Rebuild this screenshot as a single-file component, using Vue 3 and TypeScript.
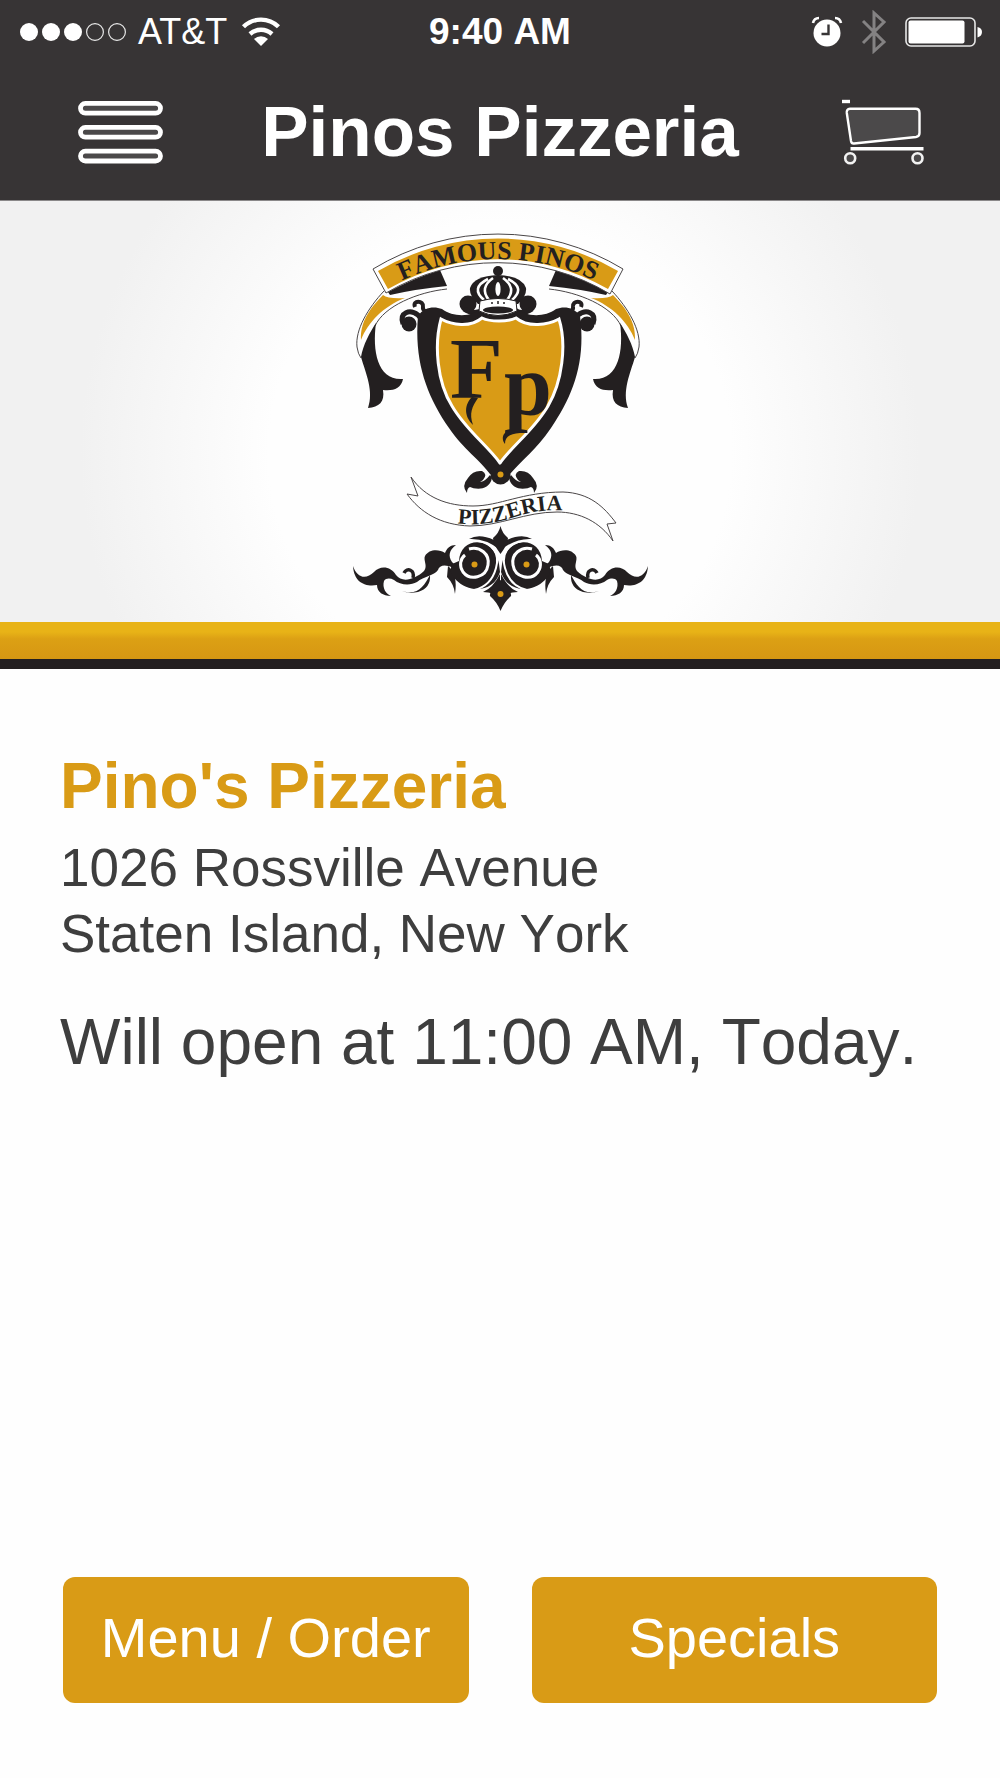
<script setup lang="ts">
interface Action {
  label: string
}

const restaurant = {
  title: 'Pinos Pizzeria',
  name: "Pino's Pizzeria",
  street: '1026 Rossville Avenue',
  city: 'Staten Island, New York',
  hours: 'Will open at 11:00 AM, Today.',
}

const status = { carrier: 'AT&T', time: '9:40 AM', bars: 3 }

const actions: Action[] = [{ label: 'Menu / Order' }, { label: 'Specials' }]

const mirrorCrest = 'translate(996 0) scale(-1 1)'
const mirrorBase = 'translate(1001 0) scale(-1 1)'
</script>

<template>
  <div class="page">
    <header class="header">
      <div class="status">
        <div class="status-left">
          <svg width="111" height="20" viewBox="0 0 111 20" aria-hidden="true">
            <circle
              v-for="n in 5"
              :key="n"
              :cx="n * 22 - 10"
              cy="10"
              :r="n <= status.bars ? 9 : 8.4"
              :fill="n <= status.bars ? '#fff' : 'none'"
              :stroke="n <= status.bars ? 'none' : '#e8e8e8'"
              stroke-width="1.2"
            />
          </svg>
          <span class="carrier">{{ status.carrier }}</span>
          <svg width="40" height="30" viewBox="0 0 40 30" aria-hidden="true">
            <g fill="none" stroke="#fff" stroke-width="4.4">
              <path d="M2.5 9.8 A25 25 0 0 1 37.5 9.8" />
              <path d="M9 17 A16.5 16.5 0 0 1 31 17" />
            </g>
            <path d="M13 22 A10.5 10.5 0 0 1 27 22 L20 29 Z" fill="#fff" />
          </svg>
        </div>
        <span class="time">{{ status.time }}</span>
        <div class="status-right">
          <svg width="32" height="32" viewBox="0 0 32 32" aria-hidden="true">
            <circle cx="16" cy="17" r="13.5" fill="#fff" />
            <path d="M2 7 Q3 2 8 2 M30 7 Q29 2 24 2" fill="none" stroke="#fff" stroke-width="2.6" />
            <path d="M17.5 8.5 V18 H10.5" fill="none" stroke="#373435" stroke-width="2.4" />
          </svg>
          <svg width="26" height="44" viewBox="0 0 26 44" aria-hidden="true">
            <path d="M2 11 L23 32 L13 41 V3 L23 12 L2 33" fill="none" stroke="#848283" stroke-width="3" />
          </svg>
          <svg width="78" height="32" viewBox="0 0 78 32" aria-hidden="true">
            <rect x="1" y="2" width="69" height="28" rx="5" fill="none" stroke="#e6e6e6" stroke-width="1.6" />
            <rect x="3.5" y="4.5" width="56" height="23" rx="2" fill="#fff" />
            <path d="M72.5 11 Q77 12 77 16 Q77 20 72.5 21.5 Z" fill="#fff" />
          </svg>
        </div>
      </div>

      <nav class="bar">
        <button class="icon-button" type="button" aria-label="Open menu">
          <svg width="88" height="64" viewBox="0 0 88 64" aria-hidden="true">
            <g fill="#4b494a" stroke="#fff" stroke-width="4.8">
              <rect x="4.5" y="3.4" width="80" height="9.8" rx="4.9" />
              <rect x="4.5" y="27.4" width="80" height="9.8" rx="4.9" />
              <rect x="4.5" y="51.2" width="80" height="9.8" rx="4.9" />
            </g>
          </svg>
        </button>
        <h1 class="title">{{ restaurant.title }}</h1>
        <button class="icon-button" type="button" aria-label="View cart">
          <svg width="82" height="66" viewBox="0 0 82 66" aria-hidden="true">
            <path d="M0 2.5 H8" stroke="#fff" stroke-width="3.4" />
            <path
              d="M8 9.8 H73.5 Q77.5 9.8 77.5 14 V34 Q77.5 37.5 74 38 L12 44.5 Q9.5 44.8 9 42 L4.8 14 Q4.3 10 8 9.8 Z"
              fill="#4b494a"
              stroke="#fff"
              stroke-width="2.4"
            />
            <path d="M8.5 49.8 H81.5" stroke="#fff" stroke-width="3.4" />
            <circle cx="8.2" cy="59.3" r="5" fill="#4b494a" stroke="#f2f2f2" stroke-width="2.6" />
            <circle cx="75.5" cy="59.3" r="5" fill="#4b494a" stroke="#f2f2f2" stroke-width="2.6" />
          </svg>
        </button>
      </nav>
    </header>

    <section class="hero">
      <svg class="crest" width="320" height="400" viewBox="340 212 320 400" role="img" aria-label="Famous Pinos Pizzeria">
        <defs>
          <path id="arc-top" d="M393 285 A226 226 0 0 1 603 285" />
          <path id="arc-ribbon" d="M440 519 C462 527 485 525 505 520 C530 512 552 506 580 514" />

          <g id="side">
            <!-- trailing ribbon -->
            <path d="M384 291 C368 308 355 330 357 347 Q358 354 361 358 M447 289 C418 292 384 306 375 326" fill="none" stroke="#4a4647" stroke-width="1" />
            <path d="M383 295 Q388 299 405 298 C384 306 368 322 361 340 C360 322 370 308 383 295 Z" fill="#d99b16" />
            <path d="M376 323 C372 352 378 381 403 379 C401 389 393 391 383 390 C385 402 379 407 368 408 C374 391 366 374 361 357 C363 345 370 332 376 323 Z" fill="#231f20" />
            <path d="M388 292 Q412 279 440 270 L447 286 Q416 289 390 295 Z" fill="#231f20" />
            <!-- shield shoulder curls -->
            <path d="M403 324 C399 312 410 309 418 315 Q423 319 422 330" fill="none" stroke="#231f20" stroke-width="5" />
            <circle cx="409" cy="324" r="7.5" fill="#231f20" />
            <path d="M415 307 C412 300 424 300 423 307 Q422 312 432 313" fill="none" stroke="#231f20" stroke-width="4" />
            <!-- scroll beside the crown -->
            <circle cx="468" cy="304" r="8.5" fill="#231f20" />
            <path d="M464 309 Q474 316 486 309" fill="none" stroke="#231f20" stroke-width="5" />
          </g>

          <g id="flourish">
            <path
              d="M353 566 C357 578 366 580 374 572 C380 565 391 566 396 575 C402 583 414 580 424 571 C428 566 423 560 425 556 C429 549 439 549 445 553 C447 548 450 545 456 545 C449 550 448 556 452 562 L464 574 C450 564 440 563 438 570 C434 576 424 576 417 582 C410 586 400 585 394 580 C390 578 386 578 384 581 C382 588 386 594 391 596 C383 596 377 592 377 585 C366 587 354 583 353 566 Z"
              fill="#231f20"
            />
            <path d="M404 573 C407 567 415 570 413 578" fill="none" stroke="#231f20" stroke-width="3.5" />
            <path d="M402 591 C418 596 424 586 430 575 Q431 588 418 592 Q409 594 402 591 Z" fill="#231f20" />
            <path d="M448 566 Q458 574 455 594 Q454 584 447 577 Z" fill="#231f20" />
            <path d="M459 561 C460 536 494 535 499 564 L500 572 C494 592 470 594 456 580 C450 574 450 570 452 564 Z" fill="#231f20" />
            <path d="M469 549 C480 546 490 554 488 565 C486 578 470 581 463 572 C459 566 460 559 465 555" fill="none" stroke="#fff" stroke-width="3" />
            <path d="M478 541 C493 543 500 554 496 568 C492 583 483 588 474 590" fill="none" stroke="#fff" stroke-width="2" />
            <path d="M469 539 Q479 533 494 540 L500 550 Q486 538 469 539 Z" fill="#231f20" />
            <path d="M483 592 Q493 588 500 574 V598 Q494 592 483 592 Z" fill="#231f20" />
            <circle cx="474.5" cy="564.5" r="3" fill="#d99b16" />
          </g>

          <g id="foot">
            <path d="M492 478 C489 492 474 489 470 487 Q467 488 467 493 Q461 486 468 478 Q473 470 482 471 Q488 474 483 480 Q479 483 478 480 Q482 485 490 475 Z" fill="#231f20" />
          </g>
        </defs>

        <use href="#side" />
        <use href="#side" :transform="mirrorCrest" />

        <!-- top banner -->
        <path d="M373 269 A241 241 0 0 1 623 269 L610 294 A219 219 0 0 0 386 293 Z" fill="#fff" stroke="#4a4647" stroke-width="1" />
        <path d="M378 271 A238 238 0 0 1 618 271 L608 289 A219 219 0 0 0 388 289 Z" fill="#d99b16" />
        <text class="banner-text" text-anchor="middle">
          <textPath href="#arc-top" startOffset="50%">FAMOUS PINOS</textPath>
        </text>

        <!-- shield -->
        <path
          d="M418 316 C424 307 434 306 442 309 C454 318 474 317 482 307 H516 C524 317 544 318 556 309 C564 306 574 307 580 316 C586 362 573 396 551 428 C536 450 522 460 510 474 H490 C480 460 464 450 449 428 C427 396 414 362 418 316 Z"
          fill="#231f20"
        />
        <path
          d="M441 319 C452 325 470 328 482 318 C490 322 508 322 516 318 C528 328 548 325 559 319 C567 345 562 382 548 406 C534 430 513 445 500 463 C487 445 466 430 452 406 C437 382 434 345 441 319 Z"
          fill="#d99b16"
          stroke="#fff"
          stroke-width="3"
        />
        <text class="monogram" x="450" y="398">F</text>
        <text class="monogram" x="504" y="414">p</text>
        <!-- tails under the monogram -->
        <path d="M472 397 C465 404 463 415 473 425 C469 413 472 407 478 398 Z" fill="#231f20" />
        <path d="M512 430 C504 430 500 438 505 444 C505 437 509 434 520 433 Z" fill="#231f20" />

        <!-- crown -->
        <circle cx="498" cy="271" r="5" fill="#231f20" />
        <path d="M478 304 Q469 296 470 288 Q474 276 498 275 Q522 276 526 288 Q527 296 518 304 Z" fill="#231f20" />
        <g fill="none" stroke="#fff" stroke-width="2.6">
          <path d="M484 300 Q470 288 488 279" />
          <path d="M489 300 Q479 288 493 278" />
          <path d="M512 300 Q526 288 508 279" />
          <path d="M507 300 Q517 288 503 278" />
        </g>
        <ellipse cx="498" cy="289" rx="2.6" ry="7" fill="#fff" />
        <path d="M480 301 Q498 296 516 301 L517 311 Q498 320 479 311 Z" fill="#fff" stroke="#231f20" stroke-width="1" />
        <ellipse cx="498" cy="310" rx="15" ry="3.6" fill="#231f20" />
        <path d="M492 302 V304 M498 301 V304 M504 302 V304" stroke="#231f20" stroke-width="1.5" />

        <!-- shield foot -->
        <use href="#foot" />
        <use href="#foot" :transform="mirrorBase" />
        <circle cx="500.5" cy="474.5" r="10" fill="#231f20" />
        <circle cx="500.5" cy="474.5" r="3" fill="#d99b16" />

        <!-- lower ribbon -->
        <path
          d="M411 477 C425 498 448 506 473 506 C500 506 522 492 563 492 C590 493 604 507 616 523 L607 524 L613 541 C600 522 580 512 557 512 C525 512 500 526 470 526 C440 525 420 512 407 494 L418 496 Z"
          fill="#fff"
          stroke="#4a4647"
          stroke-width="1"
        />
        <text class="ribbon-text" text-anchor="middle">
          <textPath href="#arc-ribbon" startOffset="50%">PIZZERIA</textPath>
        </text>

        <!-- base ornament -->
        <use href="#flourish" />
        <use href="#flourish" :transform="mirrorBase" />
        <path d="M500.5 526 Q502 533 508 538 Q508 544 500.5 554 Q493 544 493 538 Q499 533 500.5 526 Z" fill="#231f20" />
        <path d="M500.5 580 Q512 590 511 596 Q504 602 500.5 611 Q497 602 490 596 Q489 590 500.5 580 Z" fill="#231f20" />
        <circle cx="500.5" cy="594" r="3" fill="#d99b16" />
      </svg>
    </section>

    <main class="info">
      <h2 class="name">{{ restaurant.name }}</h2>
      <address class="address">
        {{ restaurant.street }}<br />
        {{ restaurant.city }}
      </address>
      <p class="hours">{{ restaurant.hours }}</p>
    </main>

    <footer class="actions">
      <button v-for="action in actions" :key="action.label" class="action" type="button">
        {{ action.label }}
      </button>
    </footer>
  </div>
</template>

<style>
body {
  margin: 0;
  background: #fefefe;
}
</style>

<style scoped>
.page {
  display: flex;
  flex-direction: column;
  min-height: 100vh;
  background: #fefefe;
  color: #3e3e3e;
  font-family: 'Liberation Sans', Arial, sans-serif;
  font-kerning: none;
}

.header {
  background: #373435;
  color: #fff;
  border-bottom: 1px solid #8a8889;
}

.status {
  display: grid;
  grid-template-columns: 1fr auto 1fr;
  align-items: center;
  height: 64px;
  padding: 0 17px;
  font-size: 36px;
  line-height: 40px;
}

.status svg {
  display: block;
}

.status-left,
.status-right {
  display: flex;
  align-items: center;
}

.status-left {
  gap: 10px;
}

.status-right {
  justify-content: flex-end;
  gap: 18px;
}

.carrier {
  padding-right: 4px;
  font-kerning: normal;
}

.time {
  font-size: 37px;
  font-weight: 700;
}

.bar {
  display: grid;
  grid-template-columns: 1fr auto 1fr;
  align-items: center;
  height: 136px;
  padding: 0 76px;
}

.icon-button {
  justify-self: start;
  padding: 0;
  border: 0;
  background: none;
  cursor: pointer;
}

.icon-button:last-child {
  justify-self: end;
}

.icon-button svg {
  display: block;
}

.title {
  margin: 0;
  font-size: 71px;
  font-weight: 700;
  line-height: 80px;
}

.hero {
  display: flex;
  justify-content: center;
  padding: 11px 0 10px;
  border-bottom: 37px solid transparent;
  background:
    radial-gradient(circle 420px at 50% 60%, #fefefe 55%, #f1f1f1 100%) padding-box,
    linear-gradient(#e8b317 0, #e8b317 calc(100% - 27px), #dca014 calc(100% - 20px), #d69713 100%) border-box;
}

.crest {
  display: block;
}

.info {
  flex: 1;
  padding: 81px 60px 60px;
  border-top: 10px solid #231f20;
}

.name {
  margin: 0 0 13px;
  color: #d99b16;
  font-size: 64px;
  font-weight: 700;
  line-height: 72px;
}

.address {
  font-size: 53px;
  font-style: normal;
  line-height: 66px;
}

.hours {
  margin: 39px 0 0;
  font-size: 64px;
  line-height: 72px;
}

.actions {
  display: grid;
  grid-template-columns: 1fr 1fr;
  gap: 63px;
  padding: 0 63px 75px;
}

.action {
  height: 126px;
  padding: 0 0 4px;
  border: 0;
  border-radius: 12px;
  background: #d99b16;
  color: #fff;
  font-family: inherit;
  font-size: 56px;
  line-height: 64px;
  cursor: pointer;
}

.banner-text,
.ribbon-text,
.monogram {
  fill: #231f20;
  font-family: 'Liberation Serif', 'Times New Roman', serif;
  font-weight: 700;
}

.banner-text {
  font-size: 26px;
}

.ribbon-text {
  font-size: 22px;
}

.monogram {
  font-size: 86px;
}
</style>
